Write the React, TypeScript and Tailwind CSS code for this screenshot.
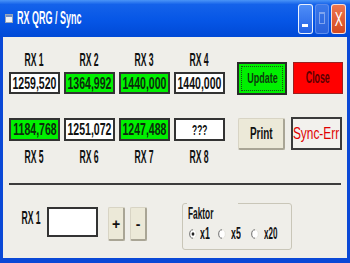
import React from "react";

const topRow = [
  { label: "RX 1", value: "1259,520", green: false },
  { label: "RX 2", value: "1364,992", green: true },
  { label: "RX 3", value: "1440,000", green: true },
  { label: "RX 4", value: "1440,000", green: false },
];

const bottomRow = [
  { label: "RX 5", value: "1184,768", green: true },
  { label: "RX 6", value: "1251,072", green: false },
  { label: "RX 7", value: "1247,488", green: true },
  { label: "RX 8", value: "???", green: false },
];

function Label({ text }: { text: string }) {
  return (
    <div className="flex h-4 w-[51px] items-center justify-center">
      <span className="inline-block scale-x-[0.48] whitespace-nowrap text-[18px] font-bold leading-none text-[#111]">{text}</span>
    </div>
  );
}

function Box({ value, green }: { value: string; green: boolean }) {
  return (
    <div
      className={`flex h-full w-[51px] items-center justify-center border-2 border-[#333] ${
        green ? "bg-[#00f000]" : "bg-white"
      }`}
    >
      <span
        className={`inline-block whitespace-nowrap font-bold leading-none ${
          value === "???" ? "scale-x-[0.56] text-[15px]" : "scale-x-[0.62] text-[17px]"
        } ${green ? "text-[#0c2a0c]" : "text-[#111]"}`}
      >
        {value}
      </span>
    </div>
  );
}

function Radio({ checked }: { checked?: boolean }) {
  return (
    <svg width="8" height="10" viewBox="0 0 8 10" className="shrink-0">
      <ellipse cx="4" cy="5" rx="3.3" ry="4.2" fill="#fff" />
      <path d="M4 0.8 A3.3 4.2 0 0 0 4 9.2" fill="none" stroke="#6d6d6d" strokeWidth="1" />
      <path d="M4 0.8 A3.3 4.2 0 0 1 4 9.2" fill="none" stroke="#e4e3dc" strokeWidth="1" />
      {checked && <ellipse cx="4" cy="5" rx="1.4" ry="1.8" fill="#222" />}
    </svg>
  );
}

export default function App() {
  return (
    <div className="flex h-[263px] w-[350px] flex-col overflow-hidden bg-[#0a48d6] font-['Liberation_Sans',Arial,sans-serif]">
      {/* title bar */}
      <div className="flex h-[37px] shrink-0 items-center bg-[linear-gradient(180deg,#4a94f7_0%,#1462ea_12%,#0656e6_55%,#0049d6_100%)] pl-[5px] pr-[4px]">
        <svg width="8" height="9" viewBox="0 0 8 9" className="shrink-0">
          <rect x="0.5" y="0.5" width="7" height="8" fill="#f4f4f4" stroke="#9aa6b8" />
          <rect x="1" y="1" width="6" height="2" fill="#6f8fc8" />
        </svg>
        <span className="ml-[4px] inline-block origin-left scale-x-[0.5] whitespace-nowrap text-[18px] font-bold text-white">
          RX QRG / Sync
        </span>
        <div className="ml-auto flex h-[30px] items-stretch gap-[2px]">
          <div className="relative w-[15px] rounded-[3px] border border-white/90 bg-[linear-gradient(180deg,#4f8ef7,#2362e6)]">
            <div className="absolute bottom-[6px] left-[3px] h-[3px] w-[6px] bg-white" />
          </div>
          <div className="relative w-[14px] rounded-[3px] border border-[#6f9af0]/70 bg-[linear-gradient(180deg,#3a78ea,#2a62dc)]">
            <div className="absolute left-[3px] top-[7px] h-[12px] w-[6px] border border-[#7fa4ee] border-t-2" />
          </div>
          <div className="flex w-[15px] items-center justify-center rounded-[3px] border border-white/80 bg-[linear-gradient(180deg,#ec7650,#d4491f)]">
            <span className="inline-block scale-x-[0.6] text-[20px] leading-none text-white">X</span>
          </div>
        </div>
      </div>

      {/* client area */}
      <div className="mx-[3px] mb-[5px] flex-1 bg-[#efeee9]">
        <div className="flex pl-[6px]">
          <div className="flex flex-col pt-[15px]">
            <div className="flex gap-1">
              {topRow.map((r) => (
                <Label key={r.label} text={r.label} />
              ))}
            </div>
            <div className="mt-1 flex h-[22px] gap-1">
              {topRow.map((r) => (
                <Box key={r.label} value={r.value} green={r.green} />
              ))}
            </div>
            <div className="mt-[24px] flex h-[23px] gap-1">
              {bottomRow.map((r) => (
                <Box key={r.label} value={r.value} green={r.green} />
              ))}
            </div>
            <div className="mt-2 flex gap-1">
              {bottomRow.map((r) => (
                <Label key={r.label} text={r.label} />
              ))}
            </div>
          </div>

          <div className="ml-3 flex flex-col pt-[25px]">
            <div className="flex items-start">
              <div className="flex h-[33px] w-[50px] items-center justify-center border-2 border-[#2a2a2a] bg-[#00f000]">
                <div className="flex h-[25px] w-[42px] items-center justify-center border border-dotted border-[#1c4a1c]">
                  <span className="inline-block scale-x-[0.6] text-[15px] font-bold text-[#0d3a0d]">Update</span>
                </div>
              </div>
              <div className="ml-[6px] flex h-[32px] w-[50px] items-center justify-center border border-[#9a2020] bg-[#ff0000]">
                <span className="inline-block scale-x-[0.55] text-[16px] font-bold text-[#5a0000]">Close</span>
              </div>
            </div>
            <div className="mt-[23px] flex items-start">
              <div className="ml-px flex h-[32px] w-[47px] items-center justify-center rounded-[2px] border border-b-2 border-r-2 border-[#d8d4c4] border-b-[#a9a595] border-r-[#a9a595] bg-[#ece9d8]">
                <span className="inline-block scale-x-[0.62] text-[16px] font-bold text-[#111]">Print</span>
              </div>
              <div className="ml-[6px] -mt-px flex h-[33px] w-[51px] items-center justify-center border-2 border-[#3a3a3a] bg-[#f2f1ed]">
                <span className="inline-block scale-x-[0.7] whitespace-nowrap text-[17px] text-[#e00000]">Sync-Err</span>
              </div>
            </div>
          </div>
        </div>

        <div className="mx-[6px] mt-[18px] h-[2px] bg-[#3c3c3c]" />

        <div className="mt-[18px] flex items-start pl-[17px]">
          <div className="mt-[7px] flex h-4 w-[22px] items-center justify-center">
            <span className="inline-block scale-x-[0.48] whitespace-nowrap text-[18px] font-bold leading-none text-[#111]">RX 1</span>
          </div>
          <div className="ml-[5px] mt-1 h-[30px] w-[51px] border-2 border-[#333] bg-white" />
          <div className="ml-[10px] mt-1 flex h-[34px] w-[17px] items-center justify-center rounded-[2px] border border-b-2 border-r-2 border-[#d8d4c4] border-b-[#a9a595] border-r-[#a9a595] bg-[#ece9d8]">
            <span className="text-[14px] font-bold leading-none text-[#111]">+</span>
          </div>
          <div className="ml-[5px] mt-1 flex h-[34px] w-[17px] items-center justify-center rounded-[2px] border border-b-2 border-r-2 border-[#d8d4c4] border-b-[#a9a595] border-r-[#a9a595] bg-[#ece9d8]">
            <span className="text-[14px] font-bold leading-none text-[#111]">-</span>
          </div>

          <div className="relative ml-[35px] h-[47px] w-[110px] rounded-[3px] border border-[#c9c6b8]">
            <div className="absolute -top-[2px] left-[4px] bg-[#efeee9] px-px">
              <span className="inline-block origin-left scale-x-[0.52] text-[16px] font-bold leading-[14px] text-[#111]">Faktor</span>
            </div>
            <div className="mt-[22px] flex items-center pl-[6px]">
              <Radio checked />
              <span className="ml-[3px] inline-block w-[20px] origin-left scale-x-[0.55] text-[16px] font-bold leading-none text-[#111]">x1</span>
              <Radio />
              <span className="ml-[5px] inline-block w-[26px] origin-left scale-x-[0.55] text-[16px] font-bold leading-none text-[#111]">x5</span>
              <Radio />
              <span className="ml-[5px] inline-block origin-left scale-x-[0.5] text-[16px] font-bold leading-none text-[#111]">x20</span>
            </div>
          </div>
        </div>
      </div>
    </div>
  );
}
